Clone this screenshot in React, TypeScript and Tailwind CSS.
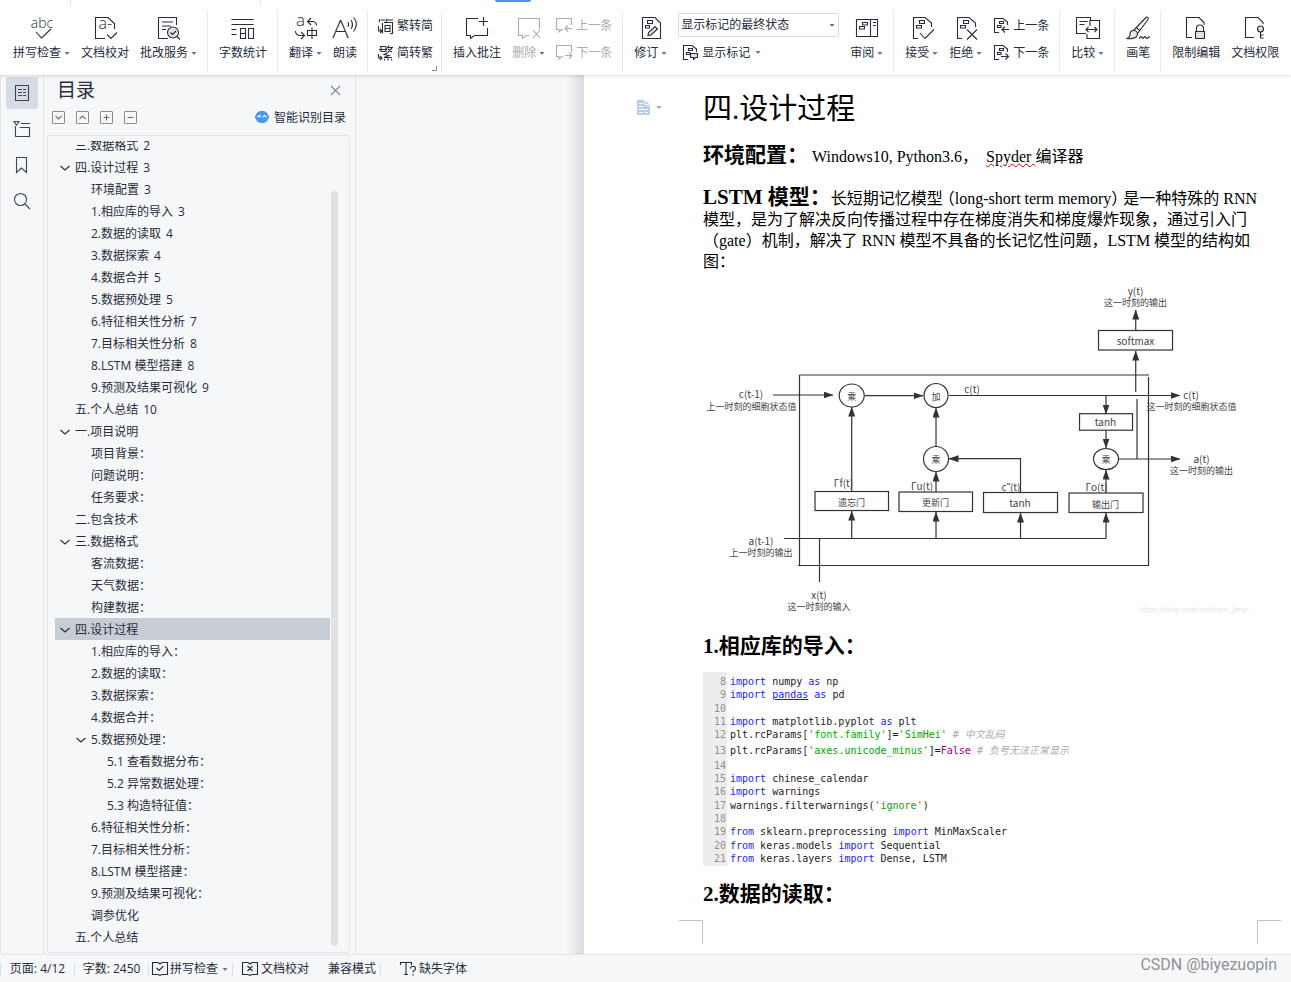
import { ReactNode } from "react";

interface OutlineItem {
    text: string;
    level: number;
    open?: boolean;
    active?: boolean;
}

const outline: OutlineItem[] = [
    { text: "三.数据格式 2", level: 1 },
    { text: "四.设计过程 3", level: 1, open: true },
    { text: "环境配置 3", level: 2 },
    { text: "1.相应库的导入 3", level: 2 },
    { text: "2.数据的读取 4", level: 2 },
    { text: "3.数据探索 4", level: 2 },
    { text: "4.数据合并 5", level: 2 },
    { text: "5.数据预处理 5", level: 2 },
    { text: "6.特征相关性分析 7", level: 2 },
    { text: "7.目标相关性分析 8", level: 2 },
    { text: "8.LSTM 模型搭建 8", level: 2 },
    { text: "9.预测及结果可视化 9", level: 2 },
    { text: "五.个人总结 10", level: 1 },
    { text: "一.项目说明", level: 1, open: true },
    { text: "项目背景：", level: 2 },
    { text: "问题说明：", level: 2 },
    { text: "任务要求：", level: 2 },
    { text: "二.包含技术", level: 1 },
    { text: "三.数据格式", level: 1, open: true },
    { text: "客流数据：", level: 2 },
    { text: "天气数据：", level: 2 },
    { text: "构建数据：", level: 2 },
    { text: "四.设计过程", level: 1, open: true, active: true },
    { text: "1.相应库的导入：", level: 2 },
    { text: "2.数据的读取：", level: 2 },
    { text: "3.数据探索：", level: 2 },
    { text: "4.数据合并：", level: 2 },
    { text: "5.数据预处理：", level: 2, open: true },
    { text: "5.1 查看数据分布：", level: 3 },
    { text: "5.2 异常数据处理：", level: 3 },
    { text: "5.3 构造特征值：", level: 3 },
    { text: "6.特征相关性分析：", level: 2 },
    { text: "7.目标相关性分析：", level: 2 },
    { text: "8.LSTM 模型搭建：", level: 2 },
    { text: "9.预测及结果可视化：", level: 2 },
    { text: "调参优化", level: 2 },
    { text: "五.个人总结", level: 1 },
];

const indent: Record<number, string> = {
    1: "pl-1",
    2: "pl-5",
    3: "pl-9",
};

function Icon({ size = 24, children }: { size?: number; children: ReactNode }) {
    return (
        <svg width={size} height={size} viewBox={`0 0 ${size} ${size}`} fill="none" stroke="currentColor" strokeWidth="1.1" className="shrink-0 overflow-visible" aria-hidden="true">
            {children}
        </svg>
    );
}

function Caret() {
    return (
        <svg width="6" height="3" viewBox="0 0 6 3" className="shrink-0 text-[#6b7890]" aria-hidden="true">
            <path d="M.5 0h5L3 3z" fill="currentColor" />
        </svg>
    );
}

function Tool({ label, caret, disabled, children }: { label: string; caret?: boolean; disabled?: boolean; children: ReactNode }) {
    return (
        <button disabled={disabled} className="flex shrink-0 flex-col items-center gap-[5px] pt-[5px] disabled:text-[#a9abaf]">
            <Icon>{children}</Icon>
            <span className="flex items-center gap-[3px] leading-4">
                {label}
                {caret && <Caret />}
            </span>
        </button>
    );
}

function SmallTool({ label, caret, disabled, children }: { label: string; caret?: boolean; disabled?: boolean; children: ReactNode }) {
    return (
        <button disabled={disabled} className="flex h-[18px] items-center gap-[3px] disabled:text-[#a9abaf]">
            <Icon size={17}>{children}</Icon>
            <span className="pt-[2px] leading-4">{label}</span>
            {caret && <span className="ml-[2px]"><Caret /></span>}
        </button>
    );
}

function Group({ children }: { children: ReactNode }) {
    return <div className="relative flex h-[61px] shrink-0 items-start gap-[11px] border-r border-[#e8eaed] pr-[10px] pl-[11px] last:border-0">{children}</div>;
}

// small page outline with two text boxes, shared by the revision icons
function MarkedPage() {
    return (
        <>
            <path d="M8 22.5H3.5V1.5H15L21.5 7V11" />
            <path d="M9.5 4.5h5v3h-5zM6.5 9.5h5v2.5h-5z" />
        </>
    );
}

function SmallMarkedPage() {
    return (
        <>
            <path d="M6 15.5H1.5V1.5H10L14.5 5V8" />
            <path d="M6.5 4.5h4v2h-4zM4.5 8.5h3.5v2H4.5z" />
        </>
    );
}

function Ribbon() {
    return (
        <header className="relative z-10 h-[75px] shrink-0 bg-white shadow-[0_1px_3px_rgba(0,0,0,0.15)]">
            <div className="flex h-[11px] items-start">
                <div className="ml-[70px] h-1 w-px bg-[#dcdfe5]" />
                <div className="ml-[189px] h-1 w-px bg-[#dcdfe5]" />
                <div className="ml-[234px] h-[2px] w-9 rounded-b bg-[#4a90f5]" />
            </div>
            <div className="flex pl-[2px]">
                <Group>
                    <Tool label="拼写检查" caret>
                        <text x="12" y="12" fontSize="14" textAnchor="middle" fill="currentColor" stroke="none" className="font-light">abc</text>
                        <path d="M6 16l5.500 6 9.500-9" />
                    </Tool>
                    <Tool label="文档校对">
                        <path d="M12 22.500H2.500V1.500H15L21.500 7.500V13" />
                        <text x="5.500" y="13" fontSize="16" fill="currentColor" stroke="none" className="font-light">a-</text>
                        <path d="M14 18.500l4 4 6-6" />
                    </Tool>
                    <Tool label="批改服务" caret>
                        <path d="M11 22.500H1.500V1.500h18V9" />
                        <path d="M5 6h11M5 10h9M5 13.500h4" />
                        <circle cx="16" cy="16.500" r="5.500" fill="#dcdfe3" />
                        <path d="M13.500 16.500l2 2 3.500-3.500M20 20.500l3 3" />
                    </Tool>
                </Group>
                <Group>
                    <Tool label="字数统计">
                        <path d="M.5 3.500h22M.5 8.500h22M.5 13.500h5M.5 18.500h5" />
                        <path d="M9.500 12.500h5v10h-5zM9.500 17.500h5M17.500 12.500h5v10h-5z" />
                    </Tool>
                </Group>
                <Group>
                    <Tool label="翻译" caret>
                        <text x="2" y="10" fontSize="17" fill="currentColor" stroke="none" className="font-light">a</text>
                        <path d="M17 2l-3.500 3.500L17 9M13.500 5.500H19a4 4 0 0 1 3.500 4" />
                        <path d="M1.500 15c0 3 2 4.500 5 4.500h3M7 16l3.500 3.500L7 23" />
                        <path d="M13.500 14.500h9v5h-9zM18 11.500v11.500" />
                    </Tool>
                    <Tool label="朗读">
                        <text x="-1" y="22" fontSize="26" fill="currentColor" stroke="none" className="font-['Lato'] font-light">A</text>
                        <path d="M15 6c1 1.500 1 3 0 5M18 4c2 3 2 6 0 9M20.500 1.500c4 4.500 4 9 0 14" />
                    </Tool>
                </Group>
                <Group>
                    <div className="-mx-[2px] flex flex-col gap-[9px] pt-[5px]">
                        <SmallTool label="繁转简">
                            <path d="M1.500 9v5h3M3 12l2 2-2 2M3 2l-1 3M4 3h4M10 2L9 5M10 3h6M5.500 6v10.500M7 5.500h8.500v11H13M8 8.500h5v6H8zM8 11.500h5" />
                        </SmallTool>
                        <SmallTool label="简转繁">
                            <path d="M1.500 10v4h3M3 12l2 2-2 2M3 2.500h6M2 5.500h8M4 2.500v5h5v-5M12 1.500L10 4.500M11 3.500h5M15 4l-4 4M11 5l4 3M11 8.500L7 10.500l5 1-5 2h8M11 13.500v3M8 15l-1 1.500M14 15l1 1.500" />
                        </SmallTool>
                    </div>
                    <span className="absolute right-[4px] bottom-[1px] size-[5px] border-r border-b border-[#7d8aa0]" />
                </Group>
                <Group>
                    <Tool label="插入批注">
                        <path d="M13 2.500H1.500v17h4v3l4-3h13V12M18.500 1v9M14 5.500h9" />
                    </Tool>
                    <Tool label="删除" caret disabled>
                        <path d="M12 19.500H9.500l-4 3v-3h-4v-17h21V13M16 14l7 8M23 14l-7 8" />
                    </Tool>
                    <div className="flex flex-col gap-[9px] pt-[5px]">
                        <SmallTool label="上一条" disabled>
                            <path d="M7 12.500H5.500L3 15v-2.500H.500v-11h15V8M16 11.500H9M12 8.500l-3 3 3 3" />
                        </SmallTool>
                        <SmallTool label="下一条" disabled>
                            <path d="M7 12.500H5.500L3 15v-2.500H.500v-11h15V8M9 11.500h7M13 8.500l3 3-3 3" />
                        </SmallTool>
                    </div>
                </Group>
                <Group>
                    <Tool label="修订" caret>
                        <path d="M3.500 1.500H16L21.500 7v15.500h-18z" />
                        <path d="M8.500 4.500h5v3h-5zM6.500 9.500h4v2.500h-4z" />
                        <path d="M9 19.500l.5-3 6.500-6 2.500 2.500-6.500 6z" fill="#dcdfe3" />
                    </Tool>
                    <div className="flex flex-col gap-[6px] pt-[2px]">
                        <div className="relative flex items-center">
                            <select aria-label="标记状态" className="h-6 w-[161px] appearance-none rounded-[2px] border border-[#d9dce1] bg-white px-[2px] outline-none">
                                <option>显示标记的最终状态</option>
                            </select>
                            <span className="pointer-events-none absolute right-1"><Caret /></span>
                        </div>
                        <div className="pl-1">
                            <SmallTool label="显示标记" caret>
                                <SmallMarkedPage />
                                <path d="M8.500 9.500h7v4h-2l-2 2v-2h-3z" fill="#dcdfe3" />
                            </SmallTool>
                        </div>
                    </div>
                    <Tool label="审阅" caret>
                        <path d="M1.500 3.500h21v17h-21zM15.500 3.500v17M18 6.500h3M18 9.500h3" />
                        <path d="M7.500 6.500h5v2.500h-5zM4.500 10.500h5V13h-5z" />
                    </Tool>
                </Group>
                <Group>
                    <Tool label="接受" caret>
                        <MarkedPage />
                        <path d="M10 17l5 5.500 9-9" />
                    </Tool>
                    <Tool label="拒绝" caret>
                        <MarkedPage />
                        <path d="M13 13.500l10 10M23 13.500l-10 10" />
                    </Tool>
                    <div className="flex flex-col gap-[9px] pt-[5px]">
                        <SmallTool label="上一条">
                            <SmallMarkedPage />
                            <path d="M16 12.500H9M12 9.500l-3 3 3 3" />
                        </SmallTool>
                        <SmallTool label="下一条">
                            <SmallMarkedPage />
                            <path d="M8 12.500h7M12.500 9.500l3 3-3 3" />
                        </SmallTool>
                    </div>
                </Group>
                <Group>
                    <Tool label="比较" caret>
                        <path d="M10 17.500H.500v-16h14V5M3.500 5.500h8M3.500 8.500h5" />
                        <path d="M14 10V4.500h9.500v18H11V18M10 13.500h11M12.500 11L10 13.500l2.500 2.500M18.500 11l2.500 2.500-2.500 2.500" />
                    </Tool>
                </Group>
                <Group>
                    <Tool label="画笔">
                        <path d="M7.500 14.500L20 1.500c1-1 3 0 2 2L11.500 17.500M10 11.500l4 3" />
                        <path d="M7.500 14.500c-3 0-3.500 2-3.500 4S3 22 .5 22.500c4 .5 11 0 11-4.500 0-2-2-3.500-4-3.500z" fill="#e7e9ec" />
                        <path d="M13 22.500l2-2 2 2 2-2 2 2 3-2" />
                    </Tool>
                </Group>
                <Group>
                    <Tool label="限制编辑">
                        <path d="M8 21.500H2.500v-20H15l5 5V9" />
                        <path d="M12.500 15.500v-3a3.500 3.500 0 0 1 7 0v3" />
                        <path d="M11.500 15.500h9v7h-9z" fill="#dcdfe3" />
                    </Tool>
                    <Tool label="文档权限">
                        <path d="M11 21.500H2.500v-20H15l5 5V8" />
                        <circle cx="17.500" cy="13" r="3" fill="#dcdfe3" />
                        <path d="M17.500 16v6.500M17.500 19h3M17.500 22h3" />
                    </Tool>
                </Group>
            </div>
        </header>
    );
}

function SideTabs() {
    return (
        <nav className="flex w-11 shrink-0 flex-col items-center gap-1 border-x border-[#e1e4e9] pt-[2px] text-[#3a465c]">
            <button aria-label="目录" className="flex size-8 items-center justify-center rounded-[2px] bg-[#d7dce4]">
                <Icon size={18}>
                    <path d="M2.500 1.500h13v15h-13zM5 5.500h4M10 5.500h3M5 8.500h4M10 8.500h3M5 11.500h4M10 11.500h3" />
                </Icon>
            </button>
            <button aria-label="章节" className="flex size-8 items-center justify-center">
                <Icon size={18}>
                    <path d="M1 1.500h5L3.500 5zM8 3.500h9M2.500 6v10.500h14v-9H6.500" />
                </Icon>
            </button>
            <button aria-label="书签" className="flex size-8 items-center justify-center">
                <Icon size={18}>
                    <path d="M3.500 1.500h10v15l-5-4.500-5 4.500z" />
                </Icon>
            </button>
            <button aria-label="查找" className="flex size-8 items-center justify-center">
                <Icon size={18}>
                    <circle cx="7.500" cy="7.500" r="6" />
                    <path d="M12 12l5 5" />
                </Icon>
            </button>
        </nav>
    );
}

function BoxButton({ label, d }: { label: string; d: string }) {
    return (
        <button aria-label={label} className="flex size-[13px] items-center justify-center rounded-[1px] border border-[#878b92] text-[#6d7178]">
            <Icon size={11}>
                <path d={d} />
            </Icon>
        </button>
    );
}

function OutlinePanel() {
    return (
        <aside className="flex w-[312px] shrink-0 flex-col border-r border-[#e1e4e9] pt-px">
            <div className="flex h-7 items-center justify-between pr-[14px] pl-[13px]">
                <h2 className="text-[19px] leading-7">目录</h2>
                <button aria-label="关闭" className="text-[#7c879b]">
                    <Icon size={11}>
                        <path d="M1 1l9 9M10 1l-9 9" />
                    </Icon>
                </button>
            </div>
            <div className="flex h-[26px] items-center gap-[11px] pr-[9px] pl-2">
                <BoxButton label="展开" d="M2.500 4l3 3 3-3" />
                <BoxButton label="收起" d="M2.500 7l3-3 3 3" />
                <BoxButton label="增加级别" d="M2.500 5.500h6M5.500 2.500v6" />
                <BoxButton label="减少级别" d="M2.500 5.500h6" />
                <button className="ml-auto flex items-center gap-[5px]">
                    <svg width="14" height="12" viewBox="0 0 14 12" aria-hidden="true">
                        <path d="M7 0c4 0 5.500 2 6 4 1.500 1 1.500 3 0 4-.5 2-2 4-6 4S1.500 10 1 8C-.5 7-.5 5 1 4c.500-2 2-4 6-4z" fill="#4a97f2" />
                        <path d="M2.500 6l2-1.500L6 6M8 6l1.500-1.500 2 1.500" fill="none" stroke="#fff" strokeWidth="1.200" />
                    </svg>
                    <span className="pt-[2px]">智能识别目录</span>
                </button>
            </div>
            <div className="mt-[5px] mr-[5px] mb-px ml-[3px] flex min-h-0 flex-1 rounded-[2px] border border-[#e1e4e9] pt-[5px] pl-[7px]">
                <ul className="h-full flex-1 overflow-hidden">
                    {outline.map((item, index) => (
                        <li key={index} className="first:-mt-[7px]">
                            <button className={`flex h-[22px] w-full items-center pt-[2px] whitespace-pre ${indent[item.level]} ${item.active ? "bg-[#c7cdd5]" : ""}`}>
                                <span className="flex w-4 shrink-0">
                                    {item.open && (
                                        <Icon size={12}>
                                            <path d="M1.500 4l4.500 4 4.500-4" />
                                        </Icon>
                                    )}
                                </span>
                                {item.text.replace(/ (\d+)$/, " \u2009$1")}
                            </button>
                        </li>
                    ))}
                </ul>
                <div className="mt-[50px] mr-[11px] mb-[6px] ml-px w-[7px] rounded bg-[#dfe2e5]" />
            </div>
        </aside>
    );
}

function Arrow({ d }: { d: string }) {
    return <path d={d} markerEnd="url(#head)" />;
}

function LstmDiagram() {
    return (
        <svg viewBox="703 283 554 334" className="block w-full" role="img" aria-label="LSTM 模型结构">
            <defs>
                <marker id="head" viewBox="0 0 10 7" refX="9.500" refY="3.500" markerWidth="10" markerHeight="7" markerUnits="userSpaceOnUse" orient="auto">
                    <path d="M0 0l10 3.500L0 7z" fill="#333" />
                </marker>
            </defs>
            <g fill="none" stroke="#333" strokeWidth="1.200">
                <path d="M799.500 375H1149M799.500 375V566M798 565.500H1149M1148.500 377V566" />
                <path d="M784 538.500H1106M819.500 538.500V582M949 395.500H1106M1137 399V459" />
                <Arrow d="M773 395H833" />
                <Arrow d="M865 395.700H923" />
                <Arrow d="M1100 395.500H1180" />
                <Arrow d="M1119 459H1180" />
                <Arrow d="M1106 395.500V414" />
                <Arrow d="M1106 431V448" />
                <Arrow d="M1135.700 392V351" />
                <Arrow d="M1135.700 330V310" />
                <Arrow d="M1020.500 492V458.700H949" />
                <Arrow d="M936 446V408" />
                <Arrow d="M936 492V472" />
                <Arrow d="M851.700 491V407" />
                <Arrow d="M1106 493V470" />
                <Arrow d="M851.700 538.500V511" />
                <Arrow d="M936 538.500V512" />
                <Arrow d="M1020.500 538.500V513" />
                <Arrow d="M1106 538.500V513" />
                <ellipse cx="851.700" cy="395.500" rx="12.500" ry="11.500" />
                <circle cx="936" cy="395.500" r="12" />
                <circle cx="936" cy="459" r="12.500" />
                <ellipse cx="1106" cy="459" rx="12.500" ry="10.500" />
                <rect x="1098.500" y="330.500" width="74" height="19.500" />
                <rect x="1079.500" y="413.700" width="53" height="16.500" />
                <rect x="815" y="491.500" width="73.500" height="19" />
                <rect x="899" y="492" width="73.500" height="19.500" />
                <rect x="983.500" y="492.500" width="74" height="20" />
                <rect x="1069" y="493" width="74" height="19.500" />
            </g>
            <g fill="#444" fontSize="9" textAnchor="middle">
                <text x="1135.500" y="306">这一时刻的输出</text>
                <text x="751.500" y="409.500">上一时刻的细胞状态值</text>
                <text x="851.700" y="400">乘</text>
                <text x="936" y="400">加</text>
                <text x="1191.500" y="409.500">这一时刻的细胞状态值</text>
                <text x="936" y="463">乘</text>
                <text x="1106" y="463">乘</text>
                <text x="1201.500" y="473.500">这一时刻的输出</text>
                <text x="851.500" y="505.500">遗忘门</text>
                <text x="935.500" y="506">更新门</text>
                <text x="1105.500" y="507.500">输出门</text>
                <text x="761" y="556">上一时刻的输出</text>
                <text x="819" y="610">这一时刻的输入</text>
            </g>
            <g fill="#444" fontSize="10" textAnchor="middle">
                <text x="1135.500" y="295">y(t)</text>
                <text x="1135.500" y="344.500">softmax</text>
                <text x="751" y="398">c(t-1)</text>
                <text x="972" y="392.500">c(t)</text>
                <text x="1191" y="398.500">c(t)</text>
                <text x="1105.500" y="426">tanh</text>
                <text x="1201.500" y="462.500">a(t)</text>
                <text x="843.500" y="487">Γf(t)</text>
                <text x="922" y="489.500">Γu(t)</text>
                <text x="1011" y="491">c˜(t)</text>
                <text x="1096.500" y="491">Γo(t)</text>
                <text x="1020" y="507">tanh</text>
                <text x="761" y="544.500">a(t-1)</text>
                <text x="819" y="598.500">x(t)</text>
            </g>
            <text x="1194" y="611.500" fontSize="8" fill="#e6e6e6" textAnchor="middle" className="font-['Liberation_Sans']">https://blog.csdn.net/zxm_jimin</text>
        </svg>
    );
}

function K({ children }: { children: ReactNode }) {
    return <span className="text-[#1a1aff]">{children}</span>;
}

function S({ children }: { children: ReactNode }) {
    return <span className="text-[#00a800]">{children}</span>;
}

function C({ children }: { children: ReactNode }) {
    return <span className="text-[#adadad] italic">{children}</span>;
}

const code: ReactNode[] = [
    <><K>import</K> numpy <K>as</K> np</>,
    <><K>import</K> <span className="text-[#1a1aff] underline">pandas</span> <K>as</K> pd</>,
    null,
    <><K>import</K> matplotlib.pyplot <K>as</K> plt</>,
    <>plt.rcParams[<S>'font.family'</S>]=<S>'SimHei'</S> <C># 中文乱码</C></>,
    <>plt.rcParams[<S>'axes.unicode_minus'</S>]=<span className="text-[#900090]">False</span> <C># 负号无法正常显示</C></>,
    null,
    <><K>import</K> chinese_calendar</>,
    <><K>import</K> warnings</>,
    <>warnings.filterwarnings(<S>'ignore'</S>)</>,
    null,
    <><K>from</K> sklearn.preprocessing <K>import</K> MinMaxScaler</>,
    <><K>from</K> keras.models <K>import</K> Sequential</>,
    <><K>from</K> keras.layers <K>import</K> Dense, LSTM</>,
];

function CodeBlock() {
    return (
        <ol className="mt-3 flex h-[194px] flex-col justify-between bg-[linear-gradient(to_right,#ededed_24px,transparent_24px)] pt-[3px] pb-px font-['DejaVu_Sans_Mono','Noto_Sans_CJK_SC',monospace] text-[10px] leading-[13px] text-[#1c1c1c]">
            {code.map((line, index) => (
                <li key={index} className={`flex items-center gap-1 whitespace-pre ${index === 5 ? "h-[17px]" : "h-[13px]"}`}>
                    <span className="w-[23px] shrink-0 text-right text-[#909090]">{index + 8}</span>
                    <code className="font-[inherit]">{line}</code>
                </li>
            ))}
        </ol>
    );
}

function Page() {
    return (
        <main className="grid min-w-0 flex-1 grid-cols-[119px_1fr_34px] content-start overflow-hidden bg-white font-['Liberation_Serif','Noto_Sans_CJK_SC',serif] text-black">
            <div className="flex items-start pt-[25px] pl-[53px]">
                <button aria-label="粘贴选项" className="flex items-center gap-[6px]">
                    <svg width="13" height="15" viewBox="0 0 13 15" aria-hidden="true">
                        <path d="M0 0h8l5 5v10H0z" fill="#b9cdea" />
                        <path d="M8 0v5h5M2 3.500h4M2 6.500h4M2 9.500h9M2 12.500h4M8 12.500h3" stroke="#fff" fill="none" />
                    </svg>
                    <svg width="6" height="3" viewBox="0 0 6 3" aria-hidden="true">
                        <path d="M0 0h6L3 3z" fill="#a9aeb6" />
                    </svg>
                </button>
            </div>
            <article>
                <h1 className="mt-4 text-[29px] leading-9">四.设计过程</h1>
                <p className="mt-[14px] text-base leading-7 whitespace-pre">
                    <strong className="text-[21px]">环境配置：</strong> Windows10, Python3.6，{"  "}
                    <span className="underline decoration-[#e00000] decoration-wavy decoration-1">Spyder </span>编译器
                </p>
                <p className="mt-4 text-base leading-[21px] whitespace-nowrap">
                    <strong className="text-[21px]">LSTM 模型：</strong>长短期记忆模型<span className="ml-1 [font-feature-settings:'halt']">（</span>long-short term memory<span className="mr-1 [font-feature-settings:'halt']">）</span>是一种特殊的 RNN<br />
                    模型，是为了解决反向传播过程中存在梯度消失和梯度爆炸现象，通过引入门<br />
                    （gate）机制，解决了 RNN 模型不具备的长记忆性问题，LSTM 模型的结构如<br />
                    图：
                </p>
                <figure className="mt-[11px] font-['Noto_Sans_CJK_SC',sans-serif]">
                    <LstmDiagram />
                </figure>
                <h2 className="mt-[15px] text-[21px] leading-7 font-bold">1.相应库的导入：</h2>
                <CodeBlock />
                <h2 className="mt-[14px] text-[21px] leading-7 font-bold">2.数据的读取：</h2>
            </article>
            <div />
            <div className="mt-3 flex justify-end">
                <div className="h-6 w-6 border-t border-r border-[#c4c4c4]" />
            </div>
            <div />
            <div className="mt-3 h-6 w-6 border-t border-l border-[#c4c4c4]" />
        </main>
    );
}

function Divider() {
    return <div className="h-[13px] w-px bg-[#dcdfe5]" />;
}

function StatusBar() {
    return (
        <footer className="flex h-7 shrink-0 items-center border-t border-[#e1e4e9] bg-[#f6f7f9] pt-px pr-[14px]">
            <Divider />
            <button className="w-[73px] text-center whitespace-nowrap">页面: 4/12</button>
            <Divider />
            <button className="w-[73px] text-center whitespace-nowrap">字数: 2450</button>
            <Divider />
            <button className="flex w-[83px] items-center gap-[2px] pl-[3px]">
                <Icon size={16}>
                    <path d="M6 1.500H.500v12H6l2 1 2-1h5.500v-12H10L8 3 6 1.500M4.500 7l2.500 2.500L11.500 5" />
                </Icon>
                拼写检查
                <span className="ml-[2px]"><Caret /></span>
            </button>
            <Divider />
            <button className="flex items-center gap-[3px] pl-[9px]">
                <Icon size={16}>
                    <path d="M6 1.500H.500v12H6l2 1 2-1h5.500v-12H10L8 3 6 1.500M5.500 5l5 5M10.500 5l-5 5" />
                </Icon>
                文档校对
            </button>
            <button className="mr-1 ml-[19px]">兼容模式</button>
            <Divider />
            <button className="flex items-center gap-[3px] pl-[19px]">
                <Icon size={16}>
                    <path d="M.500 4V1.500h11V4M6 1.500v12M4 13.500h4" />
                    <path d="M10.500 7.500c0-3 5-3 5 0 0 2-2.500 2-2.500 4M13 13v1.500" />
                </Icon>
                缺失字体
            </button>
            <span className="ml-auto pb-2 font-['Roboto',sans-serif] text-[16px] leading-5 text-[#8f9194]">CSDN @biyezuopin</span>
        </footer>
    );
}

export default function App() {
    return (
        <div className="flex h-screen flex-col overflow-hidden bg-[#f6f7f9] font-['Open_Sans','Noto_Sans_CJK_SC',sans-serif] text-xs text-[#262c3a]">
            <Ribbon />
            <div className="flex min-h-0 flex-1">
                <SideTabs />
                <OutlinePanel />
                <div className="flex w-[228px] shrink-0 justify-end">
                    <div className="w-[18px] bg-linear-to-r from-[#f6f7f9] to-[#d9dbde]" />
                </div>
                <Page />
            </div>
            <StatusBar />
        </div>
    );
}
